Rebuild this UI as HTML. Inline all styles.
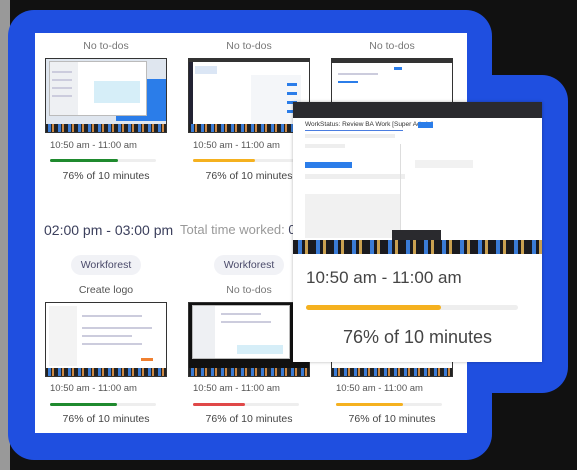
<!DOCTYPE html>
<html><head><meta charset="utf-8"><style>
*{margin:0;padding:0;box-sizing:border-box}
body{width:577px;height:470px;overflow:hidden;background:#111;position:relative;font-family:"Liberation Sans",sans-serif}
.a{position:absolute}
.glow{background:#1f4fe0;border-radius:26px}
.card{background:#fff;left:35px;top:33px;width:432px;height:400px}
.t{position:absolute;text-align:center;color:#777;font-size:10.5px;width:122px}
.thumb{position:absolute;width:122px;height:75px;background:#eef1f5;overflow:hidden;border:1px solid #333}
.tb{position:absolute;left:0;right:0;bottom:0;height:8px;background:repeating-linear-gradient(90deg,#222 0 2px,#3a7bd5 2px 5px,#222 5px 6px,#c84 6px 8px,#222 8px 10px)}
.win{position:absolute;background:#fff;border:1px solid #bbb}
.ln{position:absolute;height:2px;background:#ccd}
.bar{position:absolute;height:3px;background:#eee;width:106px;border-radius:2px}
.bar i{display:block;height:3px;border-radius:2px}
.tm{position:absolute;font-size:9.5px;color:#555;width:122px;padding-left:5px}
.pc{position:absolute;font-size:10.5px;color:#444;text-align:center;width:122px}
.pill{position:absolute;background:#f1f2f6;border-radius:12px;color:#4a4a6a;font-size:10.5px;text-align:center;height:20px;line-height:20px;width:70px}
</style></head><body>
<div class="a" style="left:0;top:0;width:10px;height:470px;background:#999"></div>
<div class="a glow" style="left:8px;top:10px;width:484px;height:450px"></div>
<div class="a glow" style="left:270px;top:75px;width:298px;height:318px"></div>
<div class="a card"></div>

<div class="t" style="left:45px;top:40px">No to-dos</div>
<div class="t" style="left:188px;top:40px">No to-dos</div>
<div class="t" style="left:331px;top:40px">No to-dos</div>

<div class="thumb" style="left:45px;top:58px;background:#dfe6ef"><div class="a" style="left:70px;top:20px;width:52px;height:42px;background:#2b7de9"></div><div class="win" style="left:3px;top:2px;width:98px;height:55px"></div><div class="a" style="left:4px;top:3px;width:28px;height:53px;background:#eef0f3"></div><div class="ln" style="left:6px;top:12px;width:20px"></div><div class="ln" style="left:6px;top:20px;width:20px"></div><div class="ln" style="left:6px;top:28px;width:20px"></div><div class="ln" style="left:6px;top:36px;width:20px"></div><div class="a" style="left:48px;top:22px;width:46px;height:22px;background:#d6eef8"></div><div class="tb"></div></div>
<div class="thumb" style="left:188px;top:58px;background:#fff"><div class="a" style="left:0;top:0;width:4px;height:75px;background:#223"></div><div class="a" style="left:0;top:0;width:122px;height:3px;background:#333"></div><div class="a" style="left:6px;top:7px;width:22px;height:8px;background:#dbe6f5"></div><div class="a" style="left:62px;top:16px;width:50px;height:50px;background:#f4f6f9"></div><div class="a" style="left:98px;top:24px;width:10px;height:3px;background:#2b7de9"></div><div class="a" style="left:98px;top:33px;width:10px;height:3px;background:#2b7de9"></div><div class="a" style="left:98px;top:42px;width:10px;height:3px;background:#2b7de9"></div><div class="a" style="left:98px;top:51px;width:10px;height:3px;background:#2b7de9"></div><div class="tb"></div></div>
<div class="thumb" style="left:331px;top:58px;background:#fff"><div class="a" style="left:0;top:0;width:122px;height:4px;background:#333"></div><div class="a" style="left:62px;top:8px;width:8px;height:3px;background:#2b7de9"></div><div class="ln" style="left:6px;top:14px;width:40px"></div><div class="ln" style="left:6px;top:22px;width:20px;background:#2b7de9"></div></div>

<div class="tm" style="left:45px;top:140px">10:50 am - 11:00 am</div>
<div class="bar" style="left:50px;top:159px"><i style="width:68px;background:#1f8a2e"></i></div>
<div class="pc" style="left:45px;top:170px">76% of 10 minutes</div>
<div class="tm" style="left:188px;top:140px">10:50 am - 11:00 am</div>
<div class="bar" style="left:193px;top:159px"><i style="width:62px;background:#f5b11f"></i></div>
<div class="pc" style="left:188px;top:170px">76% of 10 minutes</div>

<div class="a" style="left:44px;top:222px;font-size:14px;color:#3b3f5c">02:00 pm - 03:00 pm</div>
<div class="a" style="left:180px;top:222px;font-size:13px;color:#999;white-space:nowrap">Total time worked: <b style="color:#3b3f5c;font-weight:normal">00</b></div>

<div class="pill" style="left:71px;top:255px">Workforest</div>
<div class="pill" style="left:214px;top:255px">Workforest</div>
<div class="t" style="left:45px;top:284px;color:#555">Create logo</div>
<div class="t" style="left:188px;top:284px">No to-dos</div>

<div class="thumb" style="left:45px;top:302px;background:#fff"><div class="a" style="left:3px;top:3px;width:28px;height:60px;background:#f3f3f3"></div><div class="ln" style="left:36px;top:12px;width:60px"></div><div class="ln" style="left:36px;top:24px;width:70px"></div><div class="ln" style="left:36px;top:32px;width:50px"></div><div class="ln" style="left:36px;top:40px;width:60px"></div><div class="a" style="left:95px;top:55px;width:12px;height:3px;background:#f08030"></div><div class="tb"></div></div>
<div class="thumb" style="left:188px;top:302px;background:#111"><div class="win" style="left:3px;top:2px;width:98px;height:54px"></div><div class="a" style="left:4px;top:3px;width:22px;height:52px;background:#eef0f3"></div><div class="ln" style="left:32px;top:10px;width:40px"></div><div class="ln" style="left:32px;top:18px;width:50px"></div><div class="a" style="left:48px;top:42px;width:46px;height:9px;background:#d6eef8"></div><div class="tb"></div></div>
<div class="thumb" style="left:331px;top:302px;background:#fff"><div class="tb"></div></div>

<div class="tm" style="left:45px;top:383px">10:50 am - 11:00 am</div>
<div class="bar" style="left:50px;top:403px"><i style="width:67px;background:#1f8a2e"></i></div>
<div class="pc" style="left:45px;top:413px">76% of 10 minutes</div>
<div class="tm" style="left:188px;top:383px">10:50 am - 11:00 am</div>
<div class="bar" style="left:193px;top:403px"><i style="width:52px;background:#e04848"></i></div>
<div class="pc" style="left:188px;top:413px">76% of 10 minutes</div>
<div class="tm" style="left:331px;top:383px">10:50 am - 11:00 am</div>
<div class="bar" style="left:336px;top:403px"><i style="width:67px;background:#f5b11f"></i></div>
<div class="pc" style="left:331px;top:413px">76% of 10 minutes</div>

<div class="a" style="left:293px;top:102px;width:249px;height:260px;background:#fff;box-shadow:0 0 3px rgba(0,0,0,.3)">
 <div class="a" style="left:0;top:0;width:249px;height:16px;background:#2a2a2e"></div>
 <div class="a" style="left:12px;top:19px;font-size:6.5px;color:#333;white-space:nowrap">WorkStatus: Review BA Work [Super Admin]</div>
 <div class="a" style="left:12px;top:28px;width:98px;height:1px;background:#4a7de0"></div>
 <div class="a" style="left:125px;top:20px;width:15px;height:6px;background:#2b7de9"></div>
 <div class="a" style="left:12px;top:32px;width:90px;height:4px;background:#eee"></div>
 <div class="a" style="left:12px;top:42px;width:40px;height:4px;background:#eee"></div>
 <div class="a" style="left:12px;top:60px;width:47px;height:6px;background:#2b7de9"></div>
 <div class="a" style="left:12px;top:72px;width:100px;height:5px;background:#eee"></div>
 <div class="a" style="left:12px;top:92px;width:95px;height:44px;background:#f1f1f1"></div>
 <div class="a" style="left:107px;top:42px;width:1px;height:94px;background:#ddd"></div>
 <div class="a" style="left:122px;top:58px;width:58px;height:8px;background:#f1f1f1"></div>
 <div class="a" style="left:99px;top:128px;width:49px;height:10px;background:#2a2a2e"></div>
 <div class="a" style="left:0;top:138px;width:249px;height:14px;background:repeating-linear-gradient(90deg,#1a1a1e 0 5px,#3a7bd5 5px 9px,#1a1a1e 9px 12px,#c9a050 12px 15px,#1a1a1e 15px 18px)"></div>
 <div class="a" style="left:13px;top:166px;font-size:17px;color:#444">10:50 am - 11:00 am</div>
 <div class="a" style="left:13px;top:203px;width:212px;height:5px;background:#eee;border-radius:3px"><div style="width:135px;height:5px;background:#f5b11f;border-radius:3px"></div></div>
 <div class="a" style="left:0;top:225px;width:249px;text-align:center;font-size:18px;color:#444">76% of 10 minutes</div>
</div>
</body></html>
